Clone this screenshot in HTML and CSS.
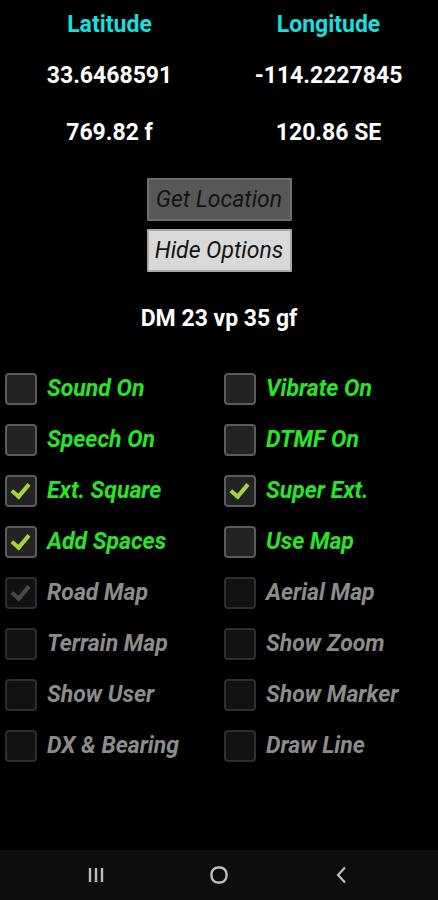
FILE: index.html
```html
<!DOCTYPE html>
<html lang="en">
<head>
<meta charset="UTF-8" />
<meta name="viewport" content="width=device-width, initial-scale=1" />
<title>Location</title>
<link rel="stylesheet" href="styles.css">
</head>
<body>
<main class="screen">
  <div class="coords">
    <div class="head">Latitude</div>
    <div class="head">Longitude</div>
    <div class="val">33.6468591</div>
    <div class="val">-114.2227845</div>
    <div class="val low">769.82 f</div>
    <div class="val low">120.86 SE</div>
  </div>

  <div class="buttons">
    <button class="btn dark">Get Location</button>
    <button class="btn light">Hide Options</button>
  </div>

  <div class="dm">DM 23 vp 35 gf</div>

  <div class="options">
    <label class="opt"><span class="box"></span>Sound On</label>
    <label class="opt"><span class="box"></span>Vibrate On</label>
    <label class="opt"><span class="box"></span>Speech On</label>
    <label class="opt"><span class="box"></span>DTMF On</label>
    <label class="opt"><span class="box on"></span>Ext. Square</label>
    <label class="opt"><span class="box on"></span>Super Ext.</label>
    <label class="opt"><span class="box on"></span>Add Spaces</label>
    <label class="opt"><span class="box"></span>Use Map</label>
    <label class="opt off"><span class="box on"></span>Road Map</label>
    <label class="opt off"><span class="box"></span>Aerial Map</label>
    <label class="opt off"><span class="box"></span>Terrain Map</label>
    <label class="opt off"><span class="box"></span>Show Zoom</label>
    <label class="opt off"><span class="box"></span>Show User</label>
    <label class="opt off"><span class="box"></span>Show Marker</label>
    <label class="opt off"><span class="box"></span>DX &amp; Bearing</label>
    <label class="opt off"><span class="box"></span>Draw Line</label>
  </div>
</main>

<nav class="navbar">
  <svg width="20" height="20" viewBox="0 0 20 20"><path d="M4 3v14M10 3v14M16 3v14" stroke="#bdbdbd" stroke-width="2.4" fill="none"/></svg>
  <svg width="20" height="20" viewBox="0 0 20 20"><rect x="2.5" y="2.5" width="15" height="15" rx="6.5" stroke="#bdbdbd" stroke-width="2.4" fill="none"/></svg>
  <svg width="20" height="20" viewBox="0 0 20 20"><path d="M13 2.5L6 10l7 7.5" stroke="#bdbdbd" stroke-width="2.2" fill="none"/></svg>
</nav>
</body>
</html>
```

FILE: styles.css
```css
/* Pantalla negra estilo Android */
body {
  margin: 0; padding: 0; background: #000; color: #fff;
  font-family: Roboto, "Liberation Sans", sans-serif;
  height: 900px; display: flex; flex-direction: column;
  overflow: hidden;
}
.screen { flex: 1; }

.coords {
  display: grid; grid-template-columns: 219px 219px;
  padding-top: 10px;
}
.head {
  text-align: center; font-weight: 700; font-size: 23px; line-height: 30px;
  color: #19dede;
}
.val {
  text-align: center; font-weight: 700; font-size: 23px; line-height: 30px;
  margin-top: 21px;
}
.val.low { margin-top: 27px; }

.buttons {
  display: flex; flex-direction: column; align-items: center; gap: 8px;
  margin-top: 30px;
}
.btn {
  width: 145px; height: 43px; padding: 0;
  font-family: Roboto, "Liberation Sans", sans-serif;
  font-style: italic; font-size: 23px; color: #141414;
  border: 2px solid #7a7a7a; border-radius: 1px;
}
.btn.dark { background: #575757; border-color: #6e6e6e; }
.btn.light { background: #d9d9d9; border-color: #a9a9a9; }

.dm {
  text-align: center; font-weight: 700; font-size: 23px; line-height: 30px;
  margin-top: 32px;
}

.options {
  display: grid; grid-template-columns: 219px 219px;
  grid-auto-rows: 51px; margin-top: 29px;
}
.opt {
  display: flex; align-items: center; gap: 10px; padding-left: 5px;
  font-weight: 700; font-style: italic; font-size: 23px;
  color: #26e626; white-space: nowrap;
}
.box {
  width: 28px; height: 28px; border: 2px solid #5c5c5c; border-radius: 4px;
  background: #232323; position: relative; flex: none;
}
.box.on::after {
  content: ""; position: absolute; left: 8px; top: 3px;
  width: 7px; height: 14px;
  border: solid #a4d63a; border-width: 0 4px 4px 0;
  transform: rotate(40deg);
}
.opt.off { color: #8c8c8c; }
.opt.off .box { border-color: #2e2e2e; background: #121212; }
.opt.off .box.on::after { border-color: #4a4a4a; }

.navbar {
  height: 50px; background: #0d0d0d;
  display: flex; justify-content: center; align-items: center; gap: 103px;
}
```
